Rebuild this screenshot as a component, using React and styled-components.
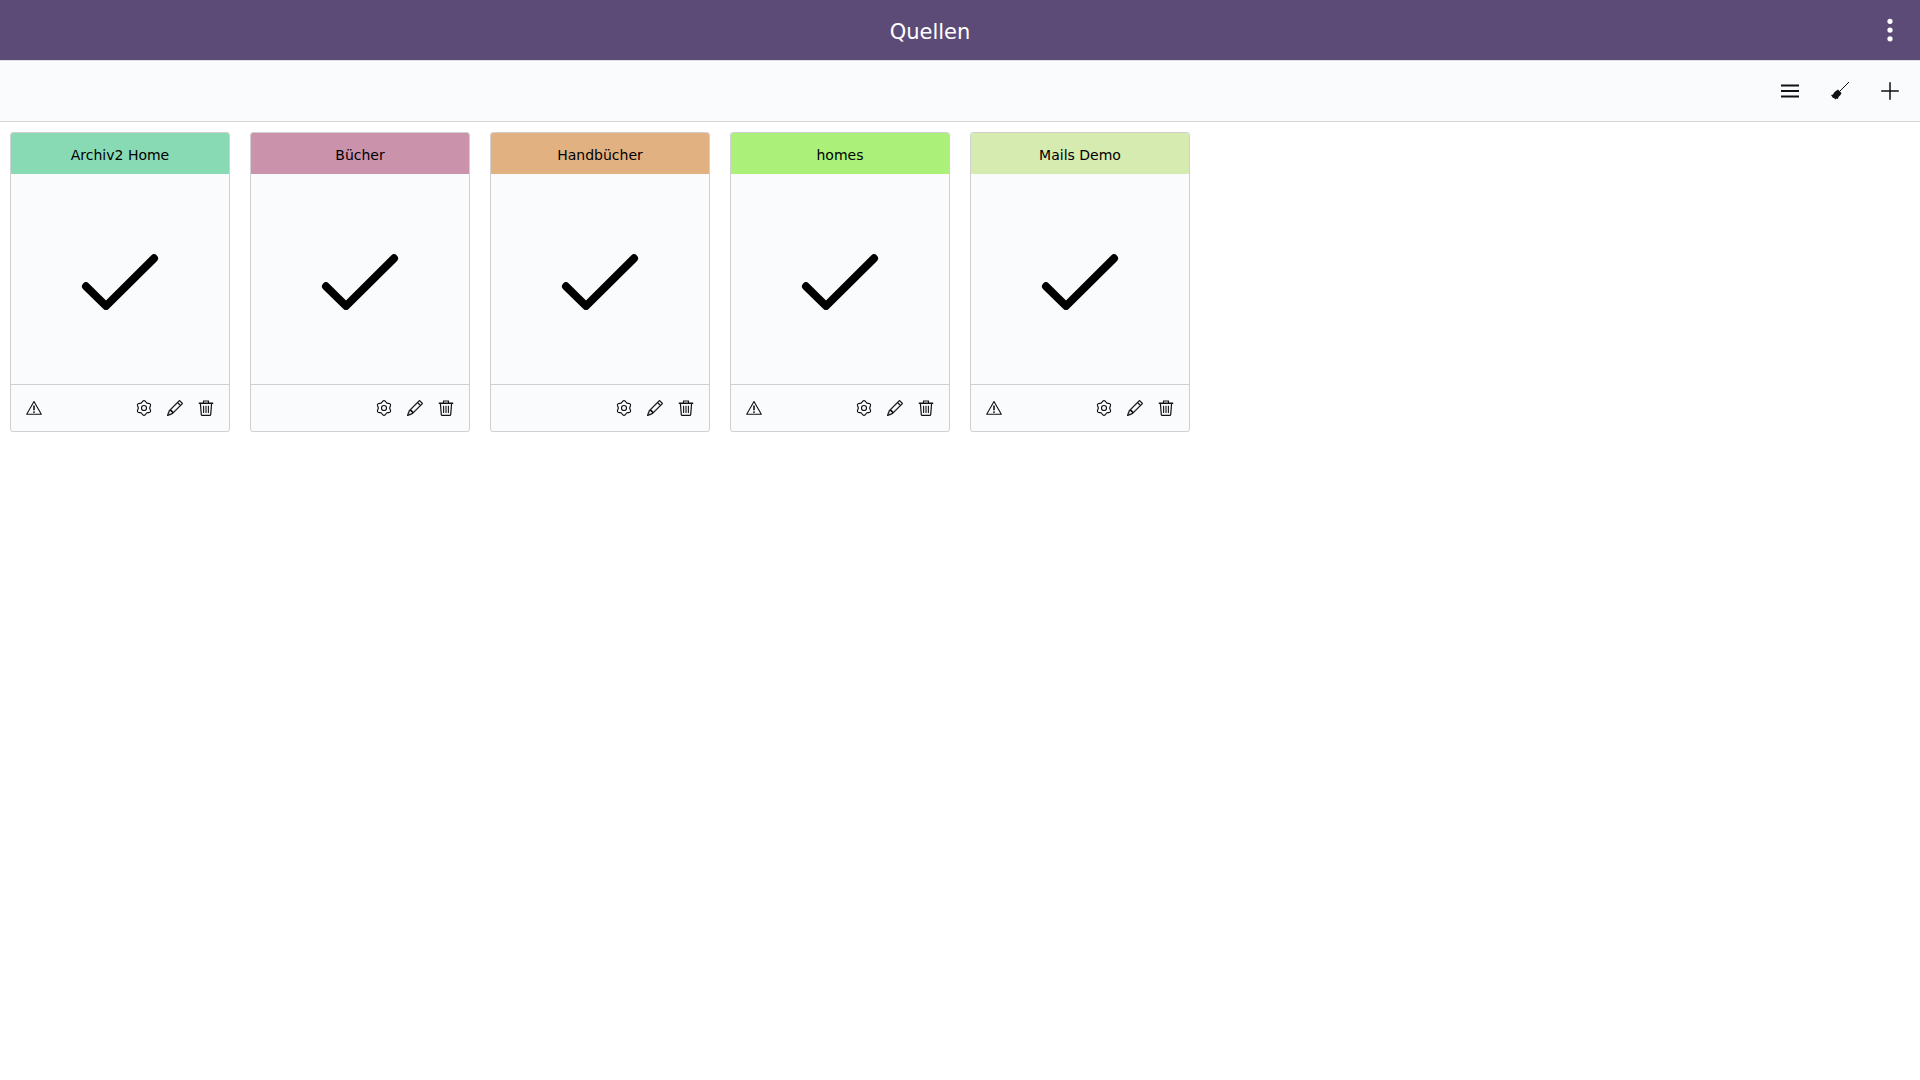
import styled, { createGlobalStyle } from "styled-components";
import { BsPencil, BsThreeDotsVertical, BsPlusLg } from "react-icons/bs";

const GlobalStyle = createGlobalStyle`
  html, body {
    margin: 0;
    padding: 0;
    background: #fff;
    font-family: "DejaVu Sans", sans-serif;
  }
`;

const TitleBar = styled.header`
  position: relative;
  height: 60px;
  background: #5d4b77;
  color: #fff;
  display: flex;
  align-items: center;
  justify-content: center;
`;

const Title = styled.h1`
  margin: 3px 0 0 -60px;
  font-size: 21px;
  font-weight: 400;
`;

const MoreButton = styled.span`
  position: absolute;
  right: 10px;
  top: 10px;
  font-size: 28px;
  line-height: 0;
  height: 40px;
  width: 40px;
  display: flex;
  align-items: center;
  justify-content: center;
`;

const Toolbar = styled.div`
  height: 60px;
  background: #fafbfd;
  border-top: 1px solid #dcdfe3;
  border-bottom: 1px solid #d4d4d4;
  display: flex;
  align-items: center;
  justify-content: flex-end;
  padding-right: 10px;
  gap: 10px;
`;

const ToolButton = styled.span`
  width: 40px;
  height: 40px;
  display: flex;
  align-items: center;
  justify-content: center;
  color: #111;
  font-size: 24px;
`;

const CardList = styled.main`
  display: flex;
  gap: 20px;
  padding: 10px;
`;

const Card = styled.section`
  width: 220px;
  height: 300px;
  box-sizing: border-box;
  background: #fafbfd;
  border: 1px solid #d0d0d0;
  border-radius: 3px;
  display: flex;
  flex-direction: column;
  overflow: hidden;
`;

const CardTitle = styled.div`
  height: 41px;
  flex: none;
  background: ${(p) => p.$color};
  color: #000;
  font-size: 14px;
  display: flex;
  align-items: center;
  justify-content: center;
  padding-top: 3px;
  box-sizing: border-box;
`;

const CardBody = styled.div`
  flex: 1;
  display: flex;
  align-items: center;
  justify-content: center;
`;

const CardFooter = styled.div`
  height: 46px;
  flex: none;
  border-top: 1px solid #d0d0d0;
  display: flex;
  align-items: center;
  padding: 0 15px;
  color: #111;
  font-size: 16px;
`;

const FooterIcon = styled.span`
  width: 16px;
  height: 16px;
  display: flex;
  margin-left: ${(p) => p.$gap || 0}px;
`;

const Spacer = styled.div`
  flex: 1;
`;

function Broom() {
  return (
    <svg width="20" height="20" viewBox="0 0 20 20" fill="#111">
      <path d="M19 1 L10 10" stroke="#111" strokeWidth="1" fill="none" />
      <path d="M8 8.5 L11.5 12 L10.5 14 L8.5 16 L8 18 L6.5 17.5 L5.5 18.5 L4 17 L3 17 L2 15.5 L1 14 L3 13.5 L4.5 11 Z" />
    </svg>
  );
}

function MenuBars() {
  return (
    <svg width="20" height="20" viewBox="0 0 20 20">
      <path d="M1 4.5 H19 M1 10 H19 M1 15.5 H19" stroke="#111" strokeWidth="1.8" fill="none" />
    </svg>
  );
}

function Warning() {
  return (
    <svg width="16" height="16" viewBox="0 0 16 16">
      <path d="M8 1.5 L15.3 14.3 H0.7 Z" fill="none" stroke="#111" strokeWidth="1.1" strokeLinejoin="round" />
      <path d="M8 5.5 V10.3" stroke="#111" strokeWidth="1.6" />
      <circle cx="8" cy="12.1" r="0.95" fill="#111" />
    </svg>
  );
}

// scalloped outline, six lobes
const gearPath =
  Array.from({ length: 72 }, (_, i) => {
    const a = (i / 72) * Math.PI * 2;
    const r = 6.5 + 0.85 * Math.cos(6 * a);
    return `${i ? "L" : "M"}${(8 + r * Math.sin(a)).toFixed(2)} ${(8 - r * Math.cos(a)).toFixed(2)}`;
  }).join(" ") + " Z";

function Gear() {
  return (
    <svg width="16" height="16" viewBox="0 0 16 16" fill="none" stroke="#111" strokeWidth="1.15">
      <path d={gearPath} strokeLinejoin="round" />
      <circle cx="8" cy="8" r="2.5" />
    </svg>
  );
}

function Trash() {
  return (
    <svg width="16" height="16" viewBox="0 0 16 16" fill="none" stroke="#111">
      <path d="M0.8 3.2 H15.2" strokeWidth="1.4" />
      <path d="M5.5 3 V1 H10.5 V3" strokeWidth="1.1" />
      <path d="M2.4 3.5 L3.3 14.6 Q3.4 15.4 4.2 15.4 H11.8 Q12.6 15.4 12.7 14.6 L13.6 3.5" strokeWidth="1.2" />
      <path d="M5.6 5.8 V13 M8 5.8 V13 M10.4 5.8 V13" strokeWidth="1.1" />
    </svg>
  );
}

function Check() {
  return (
    <svg width="80" height="61" viewBox="0 0 80 61">
      <path d="M6 37.3 L26 57 L74 9.3" fill="none" stroke="#000" strokeWidth="8" strokeLinecap="round" strokeLinejoin="round" />
    </svg>
  );
}

const sources = [
  { name: "Archiv2 Home", color: "#88dab5", warn: true },
  { name: "Bücher", color: "#cb92ac", warn: false },
  { name: "Handbücher", color: "#e2b182", warn: false },
  { name: "homes", color: "#abf078", warn: true },
  { name: "Mails Demo", color: "#d6ebaf", warn: true },
];

function SourceCard({ source }) {
  return (
    <Card>
      <CardTitle $color={source.color}>{source.name}</CardTitle>
      <CardBody>
        <Check />
      </CardBody>
      <CardFooter>
        {source.warn && (
          <FooterIcon>
            <Warning />
          </FooterIcon>
        )}
        <Spacer />
        <FooterIcon>
          <Gear />
        </FooterIcon>
        <FooterIcon $gap={15}>
          <BsPencil strokeWidth={0.3} />
        </FooterIcon>
        <FooterIcon $gap={15}>
          <Trash />
        </FooterIcon>
      </CardFooter>
    </Card>
  );
}

export default function App() {
  return (
    <>
      <GlobalStyle />
      <TitleBar>
        <Title>Quellen</Title>
        <MoreButton>
          <BsThreeDotsVertical />
        </MoreButton>
      </TitleBar>
      <Toolbar>
        <ToolButton>
          <MenuBars />
        </ToolButton>
        <ToolButton>
          <Broom />
        </ToolButton>
        <ToolButton>
          <BsPlusLg />
        </ToolButton>
      </Toolbar>
      <CardList>
        {sources.map((s) => (
          <SourceCard key={s.name} source={s} />
        ))}
      </CardList>
    </>
  );
}
